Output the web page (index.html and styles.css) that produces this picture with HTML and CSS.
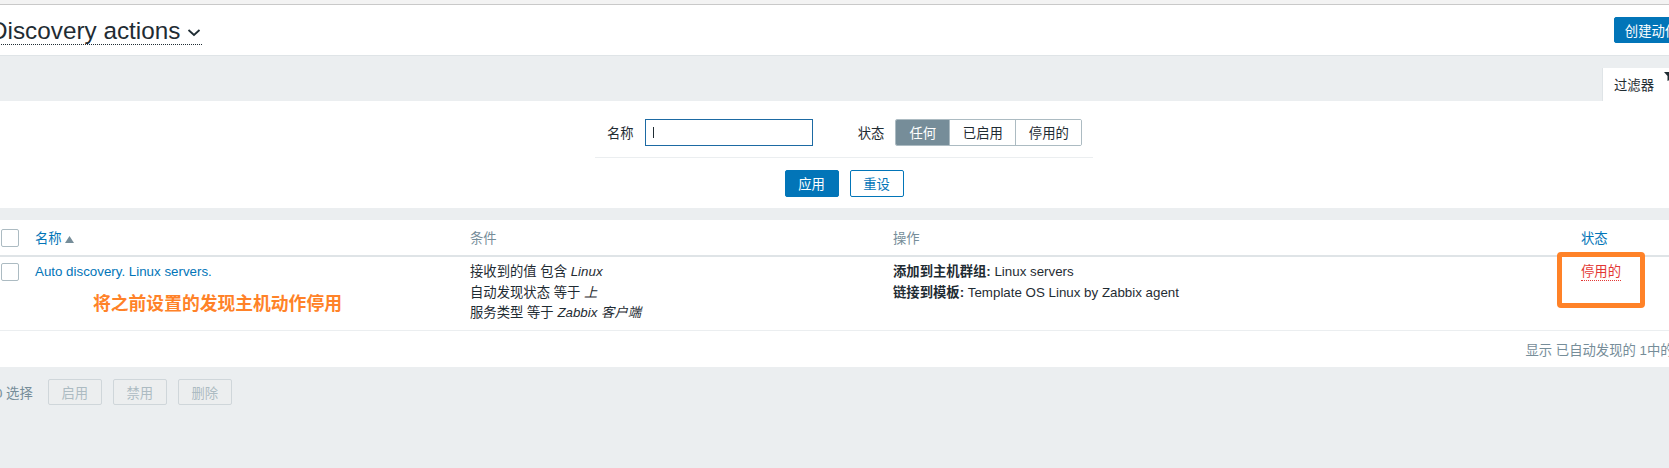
FILE: index.html
```html
<!DOCTYPE html>
<html lang="zh">
<head>
<meta charset="utf-8">
<title>Discovery actions</title>
<link rel="stylesheet" href="styles.css">
</head>
<body>
<div class="page">
  <div class="topstrip"></div>
  <header class="header">
    <h1 class="title">Discovery actions<svg class="chev" width="14" height="9" viewBox="0 0 14 9"><path d="M1.5 2 L7 7 L12.5 2" fill="none" stroke="#1f2c33" stroke-width="1.8"/></svg></h1>
    <button class="btn-primary create">创建动作</button>
  </header>

  <div class="tabbar">
    <div class="tab">过滤器<svg class="funnel" width="10" height="10" viewBox="0 0 10 10"><path d="M0 0 H9 L5.5 4 V8 L3.5 9 V4 Z" fill="#1f2c33"/></svg></div>
  </div>

  <section class="filter">
    <div class="filter-inner">
      <div class="filter-row">
        <span class="flabel">名称</span>
        <div class="finput"><span class="caret"></span></div>
        <span class="flabel status-label">状态</span>
        <div class="seg">
          <span class="seg-item seg-on">任何</span>
          <span class="seg-item">已启用</span>
          <span class="seg-item">停用的</span>
        </div>
      </div>
      <div class="filter-btns">
        <button class="btn-primary fbtn">应用</button>
        <button class="btn-alt fbtn">重设</button>
      </div>
    </div>
  </section>

  <section class="table">
    <div class="trow thead">
      <div class="c0"><span class="cb"></span></div>
      <div class="c1 link">名称<svg class="sort" width="9" height="7" viewBox="0 0 9 7"><path d="M0 7 L4.5 0 L9 7 Z" fill="#768d99"/></svg></div>
      <div class="c2 muted">条件</div>
      <div class="c3 muted">操作</div>
      <div class="c4 link">状态</div>
    </div>
    <div class="trow tdata">
      <div class="c0"><span class="cb cb-data"></span></div>
      <div class="c1">
        <div class="link">Auto discovery. Linux servers.</div>
        <div class="note">将之前设置的发现主机动作停用</div>
      </div>
      <div class="c2">
        <div>接收到的值 包含 <i>Linux</i></div>
        <div>自动发现状态 等于 <i>上</i></div>
        <div>服务类型 等于 <i>Zabbix 客户端</i></div>
      </div>
      <div class="c3">
        <div><b>添加到主机群组:</b> Linux servers</div>
        <div><b>链接到模板:</b> Template OS Linux by Zabbix agent</div>
      </div>
      <div class="c4 status-cell">
        <span class="disabled-link">停用的</span>
        <span class="mark"></span>
      </div>
    </div>
    <div class="tfoot">显示 已自动发现的 1中的1</div>
  </section>

  <div class="actions">
    <span class="sel">0 选择</span>
    <button class="btn-dis">启用</button>
    <button class="btn-dis">禁用</button>
    <button class="btn-dis">删除</button>
  </div>
</div>
</body>
</html>
```

FILE: styles.css
```css
html, body {
  margin: 0;
  padding: 0;
}
body {
  width: 1669px;
  height: 468px;
  overflow: hidden;
  background: #ebeef0;
  font-family: "Liberation Sans", Arial, "Noto Sans CJK SC", sans-serif;
  font-size: 13.33px;
  color: #1f2c33;
}
.page {
  margin-left: -10px;
  width: 1708px;
}
.topstrip {
  height: 4px;
  background: #f3f3f3;
  border-bottom: 1px solid #c9c9c9;
}
.header {
  height: 50px;
  background: #fff;
  border-bottom: 1px solid #dfe4e7;
  display: flex;
  align-items: center;
  justify-content: space-between;
  padding-right: 9px;
}
.title {
  margin: 0;
  font-weight: normal;
  font-size: 24.3px;
  line-height: 26px;
  color: #1f2c33;
  border-bottom: 1px dotted #1f2c33;
  display: flex;
  align-items: center;
  margin-top: 2px;
}
.chev {
  margin-left: 7px;
  margin-right: 1px;
  margin-top: 4px;
}
button {
  font-family: inherit;
  font-size: 13.33px;
  margin: 0;
  cursor: pointer;
}
.btn-primary {
  background: #0275b8;
  color: #fff;
  border: 1px solid #0275b8;
  border-radius: 2px;
  height: 26px;
  padding: 0 10px;
}
.btn-alt {
  background: #fff;
  color: #0275b8;
  border: 1px solid #0275b8;
  border-radius: 2px;
  height: 26px;
  padding: 0 10px;
}
.create {
  width: 75px;
  padding: 0;
}
.tabbar {
  height: 45px;
  display: flex;
  justify-content: flex-end;
  align-items: flex-end;
}
.tab {
  width: 96px;
  height: 33px;
  box-sizing: border-box;
  background: #fff;
  border-left: 1px solid #dfe4e7;
  padding-left: 11px;
  display: flex;
  align-items: center;
  gap: 10px;
}
.funnel {
  align-self: flex-start;
  margin-top: 4px;
}
.filter {
  height: 107px;
  background: #fff;
}
.filter-inner {
  width: 498px;
  margin: 0 auto;
  padding-top: 18px;
}
.filter-row {
  display: flex;
  align-items: center;
  padding-left: 12px;
  padding-bottom: 11px;
  border-bottom: 1px solid #ebeef0;
}
.flabel {
  margin-right: 11px;
}
.status-label {
  margin-left: 45px;
}
.finput {
  width: 168px;
  height: 27px;
  box-sizing: border-box;
  border: 1px solid #1d6aa3;
  display: flex;
  align-items: center;
  padding-left: 7px;
}
.caret {
  width: 1px;
  height: 11px;
  background: #1f2c33;
}
.seg {
  display: flex;
  height: 27px;
  box-sizing: border-box;
  border: 1px solid #acbbc2;
  border-radius: 2px;
  overflow: hidden;
}
.seg-item {
  display: flex;
  align-items: center;
  justify-content: center;
  width: 65px;
  border-left: 1px solid #acbbc2;
  background: #fff;
}
.seg-item:first-child {
  border-left: 0;
  width: 53px;
}
.seg-on {
  background: #768d99;
  color: #fff;
}
.filter-btns {
  display: flex;
  justify-content: center;
  gap: 11px;
  margin-top: 12px;
}
.fbtn {
  height: 27px;
  width: 54px;
  padding: 0;
}
.table {
  margin-top: 12px;
  background: #fff;
}
.trow {
  display: grid;
  grid-template-columns: 45px 435px 423px 688px 117px;
}
.thead {
  height: 35px;
  align-items: center;
  border-bottom: 2px solid #dfe4e7;
}
.tdata {
  height: 74px;
  box-sizing: border-box;
  padding-top: 5px;
  line-height: 20.5px;
  border-bottom: 1px solid #ebeef0;
  align-items: start;
}
.c0 {
  padding-left: 11px;
  display: flex;
}
.cb {
  width: 18px;
  height: 18px;
  box-sizing: border-box;
  border: 1px solid #acbbc2;
  border-radius: 2px;
  background: #fff;
  display: block;
}
.cb-data {
  margin-top: 1px;
}
.link {
  color: #0275b8;
}
.muted {
  color: #768d99;
}
.sort {
  margin-left: 3px;
}
.note {
  margin-left: 58px;
  margin-top: 7px;
  font-size: 17.8px;
  font-weight: bold;
  color: #ff8228;
  font-family: "Noto Sans CJK SC", sans-serif;
  line-height: 24px;
}
.c3 b {
  font-weight: bold;
}
.status-cell {
  position: relative;
}
.disabled-link {
  color: #e33734;
  border-bottom: 1px dotted #e33734;
  line-height: 17px;
  display: inline-block;
  margin-top: 1px;
}
.mark {
  position: absolute;
  left: -24px;
  top: -10px;
  width: 88px;
  height: 56px;
  box-sizing: border-box;
  border: 5px solid #ff8228;
  border-radius: 4px;
}
.tfoot {
  height: 36px;
  display: flex;
  align-items: center;
  justify-content: flex-end;
  padding-right: 17px;
  color: #768d99;
}
.actions {
  display: flex;
  align-items: center;
  gap: 11px;
  padding-top: 12px;
  padding-left: 5px;
}
.sel {
  color: #768d99;
  margin-right: 4px;
}
.btn-dis {
  height: 26px;
  width: 54px;
  padding: 0;
  background: #eceeef;
  border: 1px solid #cfd6da;
  border-radius: 2px;
  color: #acbbc2;
}
```
